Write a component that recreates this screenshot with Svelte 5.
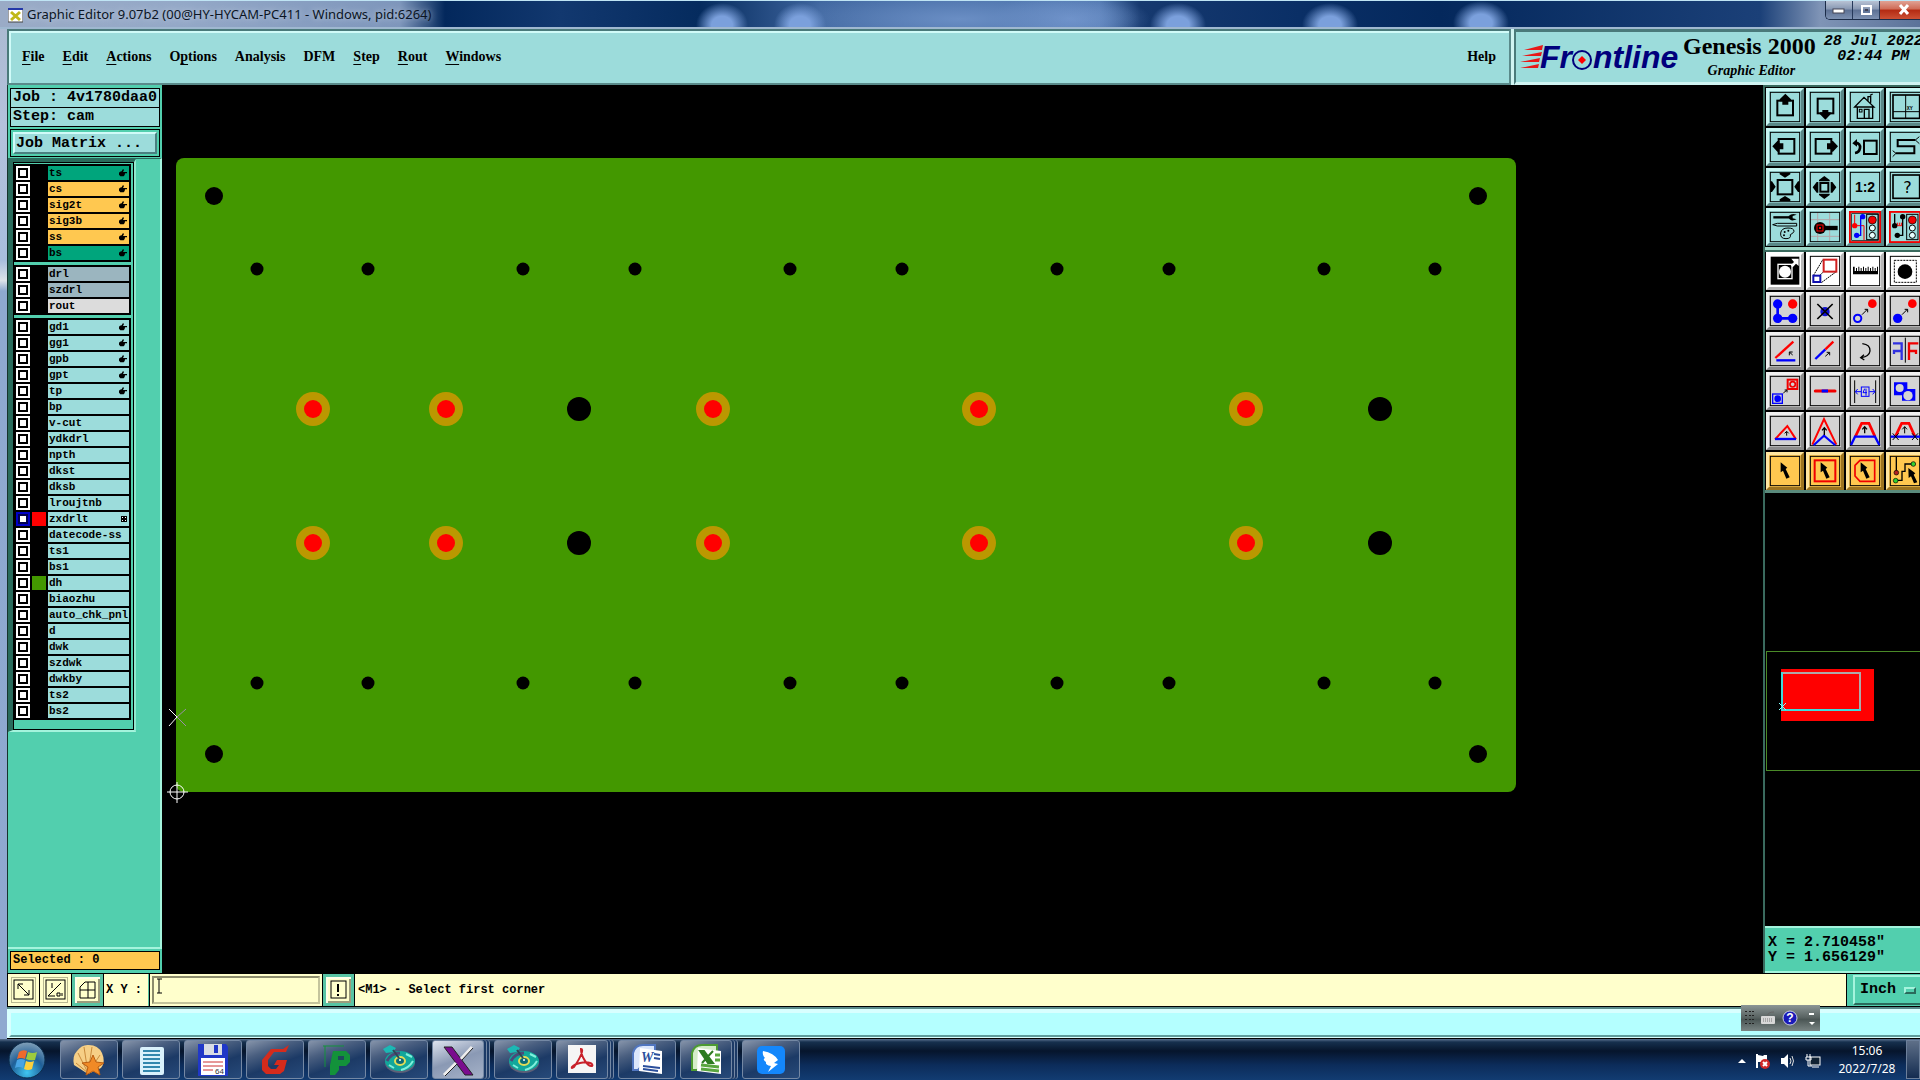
<script lang="ts">
  const menus = [
    { pre: '', key: 'F', post: 'ile' },
    { pre: '', key: 'E', post: 'dit' },
    { pre: '', key: 'A', post: 'ctions' },
    { pre: 'O', key: 'p', post: 'tions' },
    { pre: 'Analysis', key: '', post: '' },
    { pre: 'DFM', key: '', post: '' },
    { pre: '', key: 'S', post: 'tep' },
    { pre: '', key: 'R', post: 'out' },
    { pre: '', key: 'W', post: 'indows' }
  ];

  const layerGroups = [
    [
      { name: 'ts', kind: 'mask', hand: true },
      { name: 'cs', kind: 'signal', hand: true },
      { name: 'sig2t', kind: 'signal', hand: true },
      { name: 'sig3b', kind: 'signal', hand: true },
      { name: 'ss', kind: 'signal', hand: true },
      { name: 'bs', kind: 'mask', hand: true }
    ],
    [
      { name: 'drl', kind: 'drill' },
      { name: 'szdrl', kind: 'drill' },
      { name: 'rout', kind: 'rout' }
    ],
    [
      { name: 'gd1', hand: true },
      { name: 'gg1', hand: true },
      { name: 'gpb', hand: true },
      { name: 'gpt', hand: true },
      { name: 'tp', hand: true },
      { name: 'bp' },
      { name: 'v-cut' },
      { name: 'ydkdrl' },
      { name: 'npth' },
      { name: 'dkst' },
      { name: 'dksb' },
      { name: 'lroujtnb' },
      { name: 'zxdrlt', swatch: 'red', active: true },
      { name: 'datecode-ss' },
      { name: 'ts1' },
      { name: 'bs1' },
      { name: 'dh', swatch: 'green' },
      { name: 'biaozhu' },
      { name: 'auto_chk_pnl' },
      { name: 'd' },
      { name: 'dwk' },
      { name: 'szdwk' },
      { name: 'dwkby' },
      { name: 'ts2' },
      { name: 'bs2' }
    ]
  ] as any[][];

  const cornerHoles = [[52, 111], [1316, 111], [52, 669], [1316, 669]];
  const smallXs = [95, 206, 361, 473, 628, 740, 895, 1007, 1162, 1273];
  const smallYs = [184, 598];
  const padXs = [151, 284, 551, 817, 1084];
  const toolXs = [417, 1218];
  const padYs = [324, 458];

  const box = '<rect x="13" y="13" width="88" height="88" fill="none" stroke="#000" stroke-width="3"/>';

  // drawn on a grid of three units to the pixel
  const viewTools = [
    { label: 'Pan up', art: box + '<rect x="34" y="38" width="47" height="44" fill="none" stroke="#000" stroke-width="6"/><path d="M58 17L75 34V40H67V50H49V40H41V34Z"/>' },
    { label: 'Pan down', art: box + '<rect x="35" y="32" width="47" height="44" fill="none" stroke="#000" stroke-width="6"/><path d="M58 95L74 79V73H67V66H49V73H42V79Z"/>' },
    { label: 'Home', art: box + '<path d="M34 55V91H80V55M26 57L54 28L84 57ZM66 38V26H74V44M72 22L80 18M55 91V64H69V91" fill="none" stroke="#000" stroke-width="4"/><rect x="40" y="64" width="8" height="8" fill="none" stroke="#000" stroke-width="3"/>' },
    { label: 'Zoom to coordinates', art: '<rect x="13" y="13" width="96" height="88" fill="none" stroke="#000" stroke-width="3"/><rect x="21" y="21" width="80" height="70" fill="none" stroke="#000" stroke-width="5"/><path d="M59 21V91M21 71H100" fill="none" stroke="#000" stroke-width="3"/><text x="62" y="66" font-size="15" font-family="Liberation Mono" font-weight="bold">XY</text>' },
    { label: 'Pan left', art: box + '<rect x="38" y="33" width="47" height="44" fill="none" stroke="#000" stroke-width="6"/><path d="M19 55L34 39H40V46H52V64H40V71H34Z"/>' },
    { label: 'Pan right', art: box + '<rect x="29" y="33" width="47" height="44" fill="none" stroke="#000" stroke-width="6"/><path d="M96 55L81 39H75V46H63V64H75V71H81Z"/>' },
    { label: 'Previous view', art: box + '<rect x="54" y="38" width="38" height="40" fill="none" stroke="#000" stroke-width="6"/><path d="M28 44Q44 46 42 60Q40 73 27 75" fill="none" stroke="#000" stroke-width="8"/><path d="M19 46L33 33V56Z"/>' },
    { label: 'Serpentine', art: '<rect x="13" y="13" width="96" height="88" fill="none" stroke="#000" stroke-width="3"/><path d="M88 36H35V55H85V76H30" fill="none" stroke="#000" stroke-width="6"/><path d="M88 36L100 26M88 36L100 47M30 76L20 68M30 76L20 86" stroke="#000" stroke-width="3"/>' },
    { label: 'Zoom in', art: box + '<rect x="35" y="36" width="44" height="43" fill="none" stroke="#000" stroke-width="6"/><path d="M41 14H73V19L57 29L41 19ZM41 99H73V94L57 84L41 94ZM13 40V72H18L29 56L18 40ZM101 40V72H96L85 56L96 40Z"/>' },
    { label: 'Zoom out', art: box + '<rect x="43" y="45" width="24" height="26" fill="none" stroke="#000" stroke-width="6"/><path d="M55 24L71 36V40H39V36ZM55 93L71 81V77H39V81ZM20 58L32 42H37V74H32ZM91 58L79 42H74V74H79Z"/>' },
    { label: 'Scale', art: box + '<text x="57" y="72" font-size="42" text-anchor="middle" font-family="Liberation Sans" font-weight="bold">1:2</text>' },
    { label: 'Query', art: '<rect x="13" y="13" width="96" height="88" fill="none" stroke="#000" stroke-width="3"/><rect x="21" y="21" width="80" height="70" fill="none" stroke="#000" stroke-width="5"/><text x="64" y="74" font-size="48" text-anchor="middle" font-family="DejaVu Sans Mono">?</text>' },
    { label: 'Tools', art: box + '<path d="M22 28H70" stroke="#000" stroke-width="7"/><path d="M92 20Q78 14 68 24Q66 32 76 37Q84 38 92 34L80 31V24Z" /><path d="M20 50L34 46H92V54H34Z" fill="#9cdcdb" stroke="#000" stroke-width="3"/><path d="M44 75Q46 60 66 60Q84 60 84 70Q82 76 73 80Q76 92 60 92Q42 92 44 75Z" fill="none" stroke="#000" stroke-width="3"/><circle cx="56" cy="72" r="3"/><circle cx="67" cy="68" r="3"/><circle cx="54" cy="82" r="3"/>' },
    { label: 'Highlight', art: '<path d="M35 13V101M71 13V101M13 35H101M13 85H101" stroke="#b5a5a8" stroke-width="3"/>' + box + '<path d="M44 60H95" stroke="#000" stroke-width="13"/><circle cx="42" cy="60" r="18"/><rect x="33" y="51" width="18" height="18" fill="none" stroke="#f00" stroke-width="3"/><rect x="39" y="57" width="6" height="6" fill="#f00"/>' },
    { label: 'Selection filter', art: '<rect x="10" y="10" width="94" height="94" fill="none" stroke="#f00000" stroke-width="9"/><rect x="17" y="17" width="80" height="80" fill="none" stroke="#000" stroke-width="2"/><path d="M26 20V53H54V96" fill="none" stroke="#f00" stroke-width="3"/><path d="M50 26H44V82H32" fill="none" stroke="#00f" stroke-width="4"/><circle cx="26" cy="53" r="8" fill="#f00"/><circle cx="50" cy="26" r="8" fill="#00f"/><circle cx="32" cy="82" r="8" fill="#00f"/><rect x="62" y="19" width="34" height="76" fill="#9cdcdb" stroke="#000" stroke-width="3"/><circle cx="79" cy="36" r="12" fill="#f00000" stroke="#000" stroke-width="2"/><circle cx="79" cy="60" r="9" fill="#e8ffff" stroke="#000" stroke-width="3"/><circle cx="79" cy="82" r="9" fill="#e8ffff" stroke="#000" stroke-width="3"/>' },
    { label: 'Snap filter', art: '<rect x="10" y="10" width="94" height="94" fill="none" stroke="#f00000" stroke-width="9"/><path d="M26 18V53M50 26V82H32" fill="none" stroke="#000" stroke-width="4"/><path d="M26 53H48M34 51V44M40 51V44M46 51V44" stroke="#f00" stroke-width="3"/><circle cx="26" cy="53" r="8"/><circle cx="50" cy="26" r="8"/><circle cx="34" cy="82" r="8"/><rect x="62" y="19" width="34" height="76" fill="#9cdcdb" stroke="#000" stroke-width="3"/><circle cx="79" cy="36" r="12" fill="#f00000" stroke="#000" stroke-width="2"/><circle cx="79" cy="60" r="9" fill="#e8ffff" stroke="#000" stroke-width="3"/><circle cx="79" cy="82" r="9" fill="#e8ffff" stroke="#000" stroke-width="3"/>' }
  ];

  const pointer = '<path d="M44 31L64 47L59 51L71 76L61 80L51 56L44 61Z"/>';

  const editTools = [
    { label: 'Pad', tone: 'white', art: '<rect x="14" y="14" width="86" height="84"/><rect x="36" y="37" width="42" height="43" fill="none" stroke="#fff" stroke-width="4"/><circle cx="57" cy="59" r="18" fill="#fff"/><path d="M74 40L84 30L76 20H98V42L90 35L80 46Z" fill="#fff"/>' },
    { label: 'Resize polygon', tone: 'white', art: box + '<path d="M22 71L51 22M46 92L92 58M40 71L52 60" stroke="#000" stroke-width="3" stroke-dasharray="6 2"/><rect x="53" y="23" width="38" height="36" fill="none" stroke="#d02020" stroke-width="6"/><rect x="22" y="71" width="21" height="19" fill="none" stroke="#1010b0" stroke-width="6"/>' },
    { label: 'Measure', tone: 'white', art: box + '<path d="M21 44V67H96V44H93V57H89V48H86V57H82V44H79V57H75V48H72V57H68V44H65V57H61V48H58V57H54V44H51V57H47V48H44V57H40V44H37V57H33V48H30V57H26V44Z"/>' },
    { label: 'Area select', tone: 'white', art: '<rect x="13" y="13" width="96" height="88" fill="none" stroke="#000" stroke-width="3"/><rect x="25" y="25" width="66" height="66" fill="none" stroke="#000" stroke-width="3" stroke-dasharray="6 3"/><circle cx="57" cy="59" r="22"/>' },
    { label: 'Move', art: box + '<path d="M35 36V79H80" fill="none" stroke="#00f" stroke-width="8"/><circle cx="35" cy="36" r="14" fill="#00f"/><circle cx="35" cy="79" r="14" fill="#00f"/><circle cx="80" cy="79" r="14" fill="#00f"/><circle cx="80" cy="36" r="14" fill="#f00"/>' },
    { label: 'Delete', art: box + '<circle cx="57" cy="59" r="14" fill="#1010d0"/><path d="M34 36L80 81M80 36L34 81" stroke="#000" stroke-width="5"/>' },
    { label: 'Copy', art: box + '<circle cx="35" cy="79" r="11" fill="#d3d3d3" stroke="#00f" stroke-width="6"/><circle cx="79" cy="35" r="13" fill="#f00"/><path d="M48 68L64 52M56 52H65V61" fill="none" stroke="#000" stroke-width="3"/>' },
    { label: 'Copy other', art: box + '<circle cx="35" cy="79" r="14" fill="#00f"/><circle cx="79" cy="35" r="13" fill="#f00"/><path d="M48 68L64 52M56 52H65V61" fill="none" stroke="#000" stroke-width="3"/>' },
    { label: 'Rotate', art: box + '<path d="M28 78L82 29" stroke="#f00" stroke-width="7"/><path d="M31 85H88" stroke="#00f" stroke-width="7"/><path d="M80 69L71 61M70 70V60H80" fill="none" stroke="#000" stroke-width="3"/>' },
    { label: 'Extend line', art: box + '<path d="M28 81L58 52" stroke="#00f" stroke-width="7"/><path d="M58 52L82 29" stroke="#f00" stroke-width="7"/><path d="M58 73L70 62M62 61H71V70" fill="none" stroke="#000" stroke-width="3"/>' },
    { label: 'Arc', art: box + '<path d="M49 35Q73 38 72 57Q70 73 46 77M54 68L44 77L55 84" fill="none" stroke="#000" stroke-width="4"/>' },
    { label: 'Mirror', art: box + '<path d="M58 17V92" stroke="#000" stroke-width="3"/><path d="M21 34H47V84M47 57H24V66" fill="none" stroke="#3030e0" stroke-width="7"/><path d="M97 34H69V84M69 57H90V66" fill="none" stroke="#f00000" stroke-width="7"/>' },
    { label: 'Change size', art: box + '<rect x="65" y="23" width="29" height="28" fill="#d3d3d3" stroke="#f00000" stroke-width="6"/><circle cx="80" cy="37" r="8" fill="none" stroke="#f00000" stroke-width="5"/><rect x="20" y="66" width="29" height="28" fill="#d3d3d3" stroke="#00f" stroke-width="4"/><circle cx="35" cy="80" r="10" fill="#00f"/><path d="M52 63L62 55M56 54H63V61" fill="none" stroke="#000" stroke-width="3"/>' },
    { label: 'Split line', art: box + '<path d="M28 57H87" stroke="#f00000" stroke-width="9" stroke-linecap="round"/><path d="M47 57H66" stroke="#00f" stroke-width="9"/>' },
    { label: 'Spacing', art: box + '<path d="M26 25V93M89 25V93" stroke="#000" stroke-width="3"/><path d="M28 59H45M70 59H87M35 51L28 59L35 67M80 51L87 59L80 67M56 50L51 62H63M60 50V71" fill="none" stroke="#00f" stroke-width="3"/><rect x="46" y="45" width="23" height="28" fill="none" stroke="#00f" stroke-width="3"/>' },
    { label: 'Merge', art: box + '<path d="M24 31H64V51H88V86H48V70H24Z" fill="#00f"/><circle cx="41" cy="48" r="12" fill="#d3d3d3"/><circle cx="66" cy="71" r="14" fill="#d3d3d3"/>' },
    { label: 'Corner', art: box + '<path d="M27 82L64 42L90 82" fill="none" stroke="#f00" stroke-width="6"/><path d="M27 81H90" stroke="#00f" stroke-width="7"/><path d="M62 71V59M56 64L62 58L68 64" fill="none" stroke="#000" stroke-width="3"/>' },
    { label: 'Stretch corner', art: box + '<path d="M19 98L54 21L91 98" fill="none" stroke="#f00" stroke-width="6"/><path d="M23 100L54 71L88 100" fill="none" stroke="#00f" stroke-width="6"/><path d="M55 69V47M48 55L55 47L62 55" fill="none" stroke="#000" stroke-width="4"/>' },
    { label: 'Stretch segment', art: box + '<path d="M28 74L47 34H69L87 74" fill="none" stroke="#f00" stroke-width="8"/><path d="M15 99L27 74H87L100 99" fill="none" stroke="#00f" stroke-width="7"/><path d="M56 64V44M49 52L56 44L63 52" fill="none" stroke="#000" stroke-width="4"/>' },
    { label: 'Parallel segment', art: box + '<path d="M28 74L47 34H69L87 74" fill="none" stroke="#f00" stroke-width="8"/><path d="M14 74H102" stroke="#00f" stroke-width="7"/><path d="M56 64V44M49 52L56 44L63 52M20 64L38 84M38 64L20 84M78 64L96 84M96 64L78 84" fill="none" stroke="#000" stroke-width="3"/>' },
    { label: 'Select feature', tone: 'amber', art: box + pointer },
    { label: 'Select in rectangle', tone: 'amber', art: box + '<rect x="26" y="25" width="62" height="63" fill="none" stroke="#f00000" stroke-width="6"/>' + pointer },
    { label: 'Select in polygon', tone: 'amber', art: box + '<path d="M42 25H86V88H42L27 72V40Z" fill="none" stroke="#f00000" stroke-width="5"/>' + pointer },
    { label: 'Select net', tone: 'amber', art: box + '<path d="M31 14V62M31 85H48V58H57V36H80" fill="none" stroke="#000" stroke-width="4"/><circle cx="31" cy="62" r="7" fill="#b02020" stroke="#000" stroke-width="2"/><circle cx="29" cy="86" r="7" fill="#30d030" stroke="#000" stroke-width="2"/><circle cx="82" cy="36" r="7" fill="#30d030" stroke="#000" stroke-width="2"/><path d="M67 48L88 64L83 68L94 91L84 94L75 73L68 78Z"/>' }
  ];

  const disc = '<ellipse cx="18" cy="20" rx="15" ry="10" fill="#5c6078"/><ellipse cx="18" cy="18" rx="15" ry="10" fill="#12a79b"/><path d="M5 18Q9 10 18 10" fill="none" stroke="#4a4a7a" stroke-width="3"/><path d="M31 18Q27 25 19 27M24 11L30 14M7 22L12 25" fill="none" stroke="#7ff0dc" stroke-width="2"/><ellipse cx="18" cy="18" rx="5" ry="4" fill="#0c6b78" stroke="#e3dc57" stroke-width="2"/><circle cx="18" cy="17" r="1" fill="#fff"/><path d="M1 6L8 2L14 5L11 9L4 10Z" fill="#1cb8b4"/><path d="M11 7L17 15" stroke="#345" stroke-width="2"/>';

  const tasks = [
    { label: 'Shell', art: '<path d="M16 31L2 22Q0 13 5 8Q10 1 17 2Q26 2 30 10Q34 19 29 25Z" fill="#f6cf86"/><path d="M16 30L4 20M16 30L6 10M16 30L12 4M16 30L20 4M16 30L28 12" stroke="#c98b3c" stroke-width="1"/><path d="M21 12L24 19L32 20L26 24L28 32L21 28L14 32L16 24L10 20L18 19Z" fill="#f08a26" stroke="#b85d12" stroke-width="1"/>' },
    { label: 'Notepad', art: '<rect x="6" y="4" width="24" height="28" rx="2" fill="#d9f1fb"/><path d="M9 8H26M9 12H26M9 16H26M9 20H26M9 24H26M9 28H26" stroke="#3287ad" stroke-width="2"/>' },
    { label: 'Disk', art: '<path d="M2 1H30L32 4V33H2Z" fill="#2038c8"/><rect x="8" y="1" width="18" height="11" fill="#d8dce4"/><rect x="18" y="2" width="4" height="8" fill="#2038c8"/><rect x="5" y="15" width="24" height="17" fill="#fff"/><path d="M7 19H27M7 23H27M7 27H17" stroke="#c33" stroke-width="1"/><text x="19" y="31" font-size="8" font-family="Liberation Sans" fill="#333">64</text>' },
    { label: 'Genesis', art: '<path d="M31 2L28 9H16L10 17V23L13 26H18L21 22H16L19 17H29L26 28L22 31H8L4 27V17L13 6H25Z" fill="#d52b1c"/>' },
    { label: 'Plotter', art: '<path d="M10 32V22L13 8H26L30 12V19L26 23H19V27L15 32Z" fill="#13923a"/><path d="M3 3H24M5 3V24" stroke="#13923a" stroke-width="1"/><rect x="18" y="13" width="6" height="4" fill="#1f4a5c"/>' },
    { label: 'InCAM disc', art: disc },
    { label: 'X server', active: true, stacked: true, art: '<path d="M3 4H11L32 32H24Z" fill="#7a0c8e" stroke="#222" stroke-width="1"/><path d="M31 4L20 16M15 20L3 32" stroke="#eee" stroke-width="3"/><path d="M32 5L21 17M16 21L4 33" stroke="#222" stroke-width="1"/>' },
    { label: 'InCAM disc two', art: disc },
    { label: 'PDF reader', stacked: true, art: '<rect x="3" y="2" width="28" height="28" fill="#f5f5f5"/><path d="M16 6C19 6 16 14 9 24C5 27 6 22 15 20C24 18 29 21 27 23C23 24 16 14 16 6Z" fill="none" stroke="#c8202a" stroke-width="2"/>' },
    { label: 'Word', art: '<path d="M3 27V10Q5 2 13 2H25V8L8 27Z" fill="#dbe6fb" stroke="#5176c0" stroke-width="2"/><path d="M10 5L32 8V31L9 28Z" fill="#fff"/><text x="11" y="19" font-size="14" font-style="italic" font-weight="bold" font-family="Liberation Serif" fill="#2b4f9c">W</text><path d="M24 11L30 12M24 15L30 16M13 23L30 25M13 26L28 28" stroke="#2b4f9c" stroke-width="2"/>' },
    { label: 'Excel', stacked: true, art: '<path d="M3 27V10Q5 2 13 2H28V8L8 27Z" fill="#d5edc9" stroke="#4d9b32" stroke-width="2"/><path d="M9 5L32 8V31L8 28Z" fill="#fff"/><path d="M11 8H15L24 20H19ZM24 8L13 20" fill="#2e7b22" stroke="#2e7b22" stroke-width="2"/><path d="M26 12H31M26 17H31M12 26L30 28M12 22L30 24" stroke="#59a63f" stroke-width="3"/>' },
    { label: 'Messenger', art: '<rect x="3" y="3" width="28" height="28" rx="5" fill="#1487fb"/><path d="M9 8Q20 10 24 17L20 20L24 21L14 29L17 23Q11 22 12 19Q8 16 11 15Q8 12 9 8Z" fill="#fff"/>' }
  ];
</script>

<div class="desktop">
  <div class="window">
    <header class="title-bar">
      <svg class="app-icon" width="15" height="15" viewBox="0 0 15 15">
        <rect x="0" y="0" width="15" height="14" fill="#fff" stroke="#444" />
        <path d="M0 1H15" stroke="#2438a8" stroke-width="2" />
        <path d="M3 4L12 12M12 4L3 12" stroke="#c0b818" stroke-width="3" />
      </svg>
      <h1>Graphic Editor 9.07b2 (00@HY-HYCAM-PC411 - Windows, pid:6264)</h1>
      <div class="caption-buttons">
        <button class="caption" aria-label="Minimize"><svg width="14" height="12"><rect x="1" y="5" width="11" height="4" fill="#fff" stroke="#445" /></svg></button>
        <button class="caption" aria-label="Maximize"><svg width="14" height="12"><rect x="3" y="2" width="9" height="8" fill="none" stroke="#fff" stroke-width="2" /><rect x="6" y="5" width="3" height="2" fill="#445" /></svg></button>
        <button class="caption close" aria-label="Close"><svg width="14" height="12"><path d="M3 1L11 10M11 1L3 10" stroke="#fff" stroke-width="3" /></svg></button>
      </div>
    </header>

    <div class="top-row">
      <nav class="menu-bar">
        {#each menus as m}
          <button class="menu">{m.pre}{#if m.key}<span class="key">{m.key}</span>{/if}{m.post}</button>
        {/each}
        <button class="menu help">Help</button>
      </nav>
      <div class="brand">
        <svg class="logo" width="162" height="36" viewBox="0 0 162 36">
          <path d="M23 7L4 12H22ZM22 14L2 18H21ZM20 20L0 24H19ZM19 26L0 30H18Z" fill="#e81818" />
          <g class="logo-text">
            <text x="20" y="30">Fr</text>
            <text x="73" y="30">ntline</text>
          </g>
          <circle cx="62" cy="22" r="9" fill="#9cdcdb" stroke="#00007c" stroke-width="2" />
          <path d="M62 18L66 22L62 26L58 22Z" fill="#f00" />
        </svg>
        <div class="product">
          <div class="product-name">Genesis 2000</div>
          <div class="product-sub">Graphic Editor</div>
        </div>
        <div class="stamp">
          <div>28 Jul 2022</div>
          <div>02:44 PM</div>
        </div>
      </div>
    </div>

    <main class="workspace">
      <aside class="sidebar">
        <div class="job-info">
          <div>Job : 4v1780daa0</div>
          <div>Step: cam</div>
        </div>
        <div class="matrix-frame">
          <button class="matrix">Job Matrix ...</button>
        </div>
        <div class="layer-pane">
          <div class="layers">
            <div class="layers-inner">
              {#each layerGroups as group}
                <div class="group">
                  {#each group as layer}
                    <label class="layer">
                      <input type="checkbox" class="tick" class:tick-active={layer.active} />
                      <span class="swatch {layer.swatch || ''}"></span>
                      <span class="layer-name {layer.kind || ''}">
                        <span class="layer-text">{layer.name}</span>
                        {#if layer.hand}
                          <svg width="8" height="8" viewBox="0 0 24 24"><path d="M12 0L15 3L12 9H24V13H18L17 18L14 22H4L0 17V11L3 8L8 7Z" /></svg>
                        {:else if layer.active}
                          <svg width="6" height="6" shape-rendering="crispEdges"><path d="M0 0H6V6H0Z" /><path d="M1 1H2V2H1ZM4 1H5V2H4ZM1 4H2V5H1ZM4 4H5V5H4Z" fill="#fff" /></svg>
                        {/if}
                      </span>
                    </label>
                  {/each}
                </div>
              {/each}
            </div>
          </div>
        </div>
        <div class="selected">Selected : 0</div>
      </aside>

      <svg class="canvas">
        <rect x="14" y="73" width="1340" height="634" rx="8" fill="#439800" />
        {#each cornerHoles as [x, y]}
          <circle cx={x} cy={y} r="9" />
        {/each}
        {#each smallYs as y}
          {#each smallXs as x}
            <circle cx={x} cy={y} r="6.5" />
          {/each}
        {/each}
        {#each padYs as y}
          {#each padXs as x}
            <circle cx={x} cy={y} r="17" fill="#bb9800" />
            <circle cx={x} cy={y} r="9" fill="#f00" />
          {/each}
          {#each toolXs as x}
            <circle cx={x} cy={y} r="12" />
          {/each}
        {/each}
        <!-- datum and origin marks -->
        <path d="M7 624L15 632L7 641" fill="none" stroke="#fff" />
        <path d="M24 624L15 632L24 641" fill="none" stroke="#9a8fa8" />
        <circle cx="15" cy="707" r="7" fill="none" stroke="#fff" />
        <path d="M5 707H26M15 697V718" stroke="#fff" />
      </svg>

      <aside class="tool-panel">
        <div class="tool-grid view-grid">
          {#each viewTools as tool}
            <button class="tool" aria-label={tool.label}>
              <svg width="32" height="32" viewBox="9 9 96 96">{@html tool.art}</svg>
            </button>
          {/each}
        </div>
        <div class="tool-grid edit-grid">
          {#each editTools as tool}
            <button class="tool {tool.tone || 'gray'}" aria-label={tool.label}>
              <svg width="32" height="32" viewBox="9 9 96 96">{@html tool.art}</svg>
            </button>
          {/each}
        </div>
        <svg class="overview" shape-rendering="crispEdges">
          <path d="M200 158H1V277H200" fill="none" stroke="#4a8a28" />
          <rect x="16" y="176" width="93" height="52" fill="#f00" />
          <path d="M17 180H95V216" fill="none" stroke="#b0a8a8" stroke-width="2" />
          <path d="M17 179V217H96" fill="none" stroke="#40dcdc" stroke-width="2" />
          <path d="M14 210L21 217M21 210L14 217" stroke="#8ff" />
        </svg>
        <div class="coords">
          <div>X = 2.710458"</div>
          <div>Y = 1.656129"</div>
        </div>
      </aside>
    </main>

    <div class="command-bar">
      <button class="cmd" aria-label="Relative move">
        <svg width="22" height="22"><rect x="1" y="1" width="19" height="19" fill="none" stroke="#000" /><path d="M5 5L16 16M5 10V5H10M16 11V16H11" fill="none" stroke="#000" /></svg>
      </button>
      <button class="cmd" aria-label="Polar entry">
        <svg width="22" height="22"><rect x="1" y="1" width="19" height="19" fill="none" stroke="#000" /><path d="M3 17L16 4M3 17H10M7 4V9M12 14H15V17H12ZM17 14V17" fill="none" stroke="#000" /></svg>
      </button>
      <button class="cmd raised" aria-label="Grid">
        <svg width="18" height="20"><path d="M1 18V7L6 2H16V18ZM1 10H16M9 2V18" fill="none" stroke="#000" /></svg>
      </button>
      <label class="xy-label" for="xy">X Y :</label>
      <div class="xy-frame">
        <input id="xy" class="xy" type="text" />
        <svg class="caret" width="7" height="17"><path d="M1 1H6M1 15H6M3 1V15" fill="none" stroke="#000" /></svg>
      </div>
      <button class="cmd raised" aria-label="Alert">
        <svg width="18" height="20"><rect x="1" y="1" width="15" height="17" fill="none" stroke="#000" /><path d="M8 4V12M8 14V16" stroke="#000" stroke-width="2" /></svg>
      </button>
      <div class="prompt">&lt;M1&gt; - Select first corner</div>
      <div class="unit-frame">
        <button class="unit">Inch<span class="unit-mark"></span></button>
      </div>
    </div>

    <div class="status"><div class="status-inner"></div></div>
  </div>

  <div class="language-bar">
    <svg width="79" height="26">
      <path d="M5 6V22M9 6V22M12 6V22" stroke="#222" stroke-width="2" stroke-dasharray="1 3" />
      <rect x="20" y="11" width="14" height="8" rx="1" fill="#d8d8d8" /><path d="M22 14H32M22 16H32" stroke="#777" stroke-dasharray="1 1" /><path d="M26 11Q27 7 33 7" fill="none" stroke="#666" />
      <circle cx="49" cy="13" r="7" fill="#1a1ab8" stroke="#c8cce0" />
      <text x="49" y="17" text-anchor="middle" class="help-mark">?</text>
      <path d="M68 9H73" stroke="#fff" stroke-width="2" /><path d="M68 17H74L71 20Z" fill="#fff" />
    </svg>
  </div>

  <footer class="taskbar">
    <button class="start" aria-label="Start">
      <svg width="38" height="38" viewBox="0 0 38 38">
        <defs>
          <radialGradient id="orb" cx="0.5" cy="0.85" r="0.9"><stop offset="0" stop-color="#3fc6f2" /><stop offset="0.5" stop-color="#1f5f98" /><stop offset="1" stop-color="#8fa9bc" /></radialGradient>
        </defs>
        <circle cx="19" cy="19" r="18" fill="url(#orb)" stroke="#0a2c4c" />
        <path d="M11 11Q15 8 19 10L17 18Q13 16 9 18Z" fill="#ee6a2c" />
        <path d="M20 11Q25 13 29 11L27 19Q22 20 18 18Z" fill="#9ccb3e" />
        <path d="M9 19Q13 17 17 19L15 27Q11 25 7 27Z" fill="#48a4e4" />
        <path d="M18 20Q22 22 26 20L24 28Q20 30 16 28Z" fill="#fcd03c" />
      </svg>
    </button>
    <div class="tasks">
      {#each tasks as task}
        <button class="task" class:task-active={task.active} class:stacked={task.stacked} aria-label={task.label}>
          <svg width="34" height="34" viewBox="0 0 34 34">{@html task.art}</svg>
        </button>
      {/each}
    </div>
    <div class="tray">
      <svg width="8" height="6"><path d="M0 5L4 1L8 5Z" fill="#fff" /></svg>
      <svg width="16" height="16"><path d="M2 1V15" stroke="#fff" stroke-width="2" /><path d="M3 2L8 3L9 2H12V9H3Z" fill="#fff" /><circle cx="10" cy="11" r="5" fill="#d02828" /><path d="M8 9L12 13M12 9L8 13" stroke="#fff" stroke-width="2" /></svg>
      <svg width="16" height="16"><path d="M1 5H4L8 1V15L4 11H1Z" fill="#fff" /><path d="M10 5Q12 8 10 11M12 3Q15 8 12 13" fill="none" stroke="#ddd" /></svg>
      <svg width="16" height="16"><rect x="5" y="4" width="10" height="8" fill="#123" stroke="#fff" /><path d="M7 14H14M2 1V4M5 1V4M1 4H6V7H1ZM3 7V13H7" fill="none" stroke="#fff" /></svg>
    </div>
    <div class="clock">
      <div>15:06</div>
      <div>2022/7/28</div>
    </div>
    <button class="show-desktop" aria-label="Show desktop"></button>
  </footer>
</div>

<style>
  :global(body) {
    margin: 0;
    background: #000;
  }

  button {
    margin: 0;
    padding: 0;
    border: 0;
    background: none;
    color: #000;
    font: inherit;
  }

  svg {
    display: block;
    flex-shrink: 0;
  }

  .desktop {
    position: relative;
    display: flex;
    flex-direction: column;
    min-height: 100vh;
    overflow: hidden;
    background: #000;
  }

  .window {
    flex: 1;
    display: flex;
    flex-direction: column;
    padding-left: 7px;
    background: linear-gradient(#a9b8cf, #b4c2dc 12%, #a8bddd 25%, #dde3ea 27%, #8ea9d0 28%, #8fa8d0);
  }

  .title-bar {
    display: flex;
    align-items: flex-start;
    height: 29px;
    box-sizing: border-box;
    margin-left: -7px;
    padding-left: 8px;
    border-top: 1px solid #bfe4f4;
    border-bottom: 2px solid #9fb8d0;
    background:
      radial-gradient(ellipse 26px 22px at 722px 24px, #7ba0dc, #7ba0dc 40%, transparent),
      radial-gradient(ellipse 26px 22px at 800px 24px, #7ba0dc, #7ba0dc 40%, transparent),
      radial-gradient(ellipse 180px 30px at 960px 18px, #6a8ec4, transparent),
      radial-gradient(ellipse 80px 26px at 1070px 18px, #7396ce, transparent),
      radial-gradient(ellipse 28px 22px at 1178px 24px, #7ba0dc, #7ba0dc 40%, transparent),
      radial-gradient(ellipse 28px 22px at 1330px 24px, #7ba0dc, #7ba0dc 40%, transparent),
      radial-gradient(ellipse 28px 22px at 1481px 22px, #7ba0dc, #7ba0dc 40%, transparent),
      linear-gradient(90deg, #9aabc6 0, #94a8c7 180px, #7e96bb 400px, #03285c 445px, #12386f 560px, #052b5e 700px, #3f669f 820px, #4c73ab 1100px, #16396f 1140px, #0a2f66 1300px, #04285c 1440px, #1b4078 1760px, #7f94b6 1820px, #5b7299 100%);
  }

  .app-icon {
    margin-top: 7px;
  }

  h1 {
    flex: 1;
    margin: 4px 0 0 4px;
    color: #0b1524;
    font: 13px/18px "Noto Sans", sans-serif;
    text-shadow: 0 0 6px #c8d4e6;
  }

  .caption-buttons {
    display: flex;
    height: 18px;
    border: 1px solid #1b2c48;
    border-top: 0;
    border-right: 0;
    border-radius: 0 0 0 5px;
    overflow: hidden;
  }

  .caption {
    display: flex;
    align-items: center;
    justify-content: center;
    width: 27px;
    border-right: 1px solid #26395a;
    background: linear-gradient(#b8c3d4, #8797b2 45%, #5d7194 50%, #7d91b2);
  }

  .caption.close {
    width: 40px;
    padding-left: 8px;
    border-right: 0;
    background: linear-gradient(#e0a294, #cf6a55 45%, #b32a12 50%, #cc5034);
  }

  .top-row {
    display: flex;
    height: 56px;
    background: #d0f4f2;
  }

  .menu-bar {
    flex: 1;
    display: flex;
    align-items: center;
    gap: 18px;
    margin-right: 3px;
    padding: 0 13px;
    border: 2px solid #4a7a7a;
    border-bottom-color: #5a8a8a;
    border-right-color: #5a8a8a;
    background: #9cdcdb;
    box-shadow: inset 2px 2px 0 #d0fbf8;
    font: bold 14px/16px "Liberation Serif", serif;
  }

  .key {
    text-decoration: underline;
    text-underline-offset: 3px;
  }

  .help {
    margin-left: auto;
  }

  .brand {
    width: 400px;
    display: flex;
    overflow: hidden;
    padding-left: 4px;
    border-top: 3px solid #4a7a7a;
    border-left: 2px solid #4a7a7a;
    border-bottom: 3px solid #d0f4f2;
    background: #9cdcdb;
  }

  .logo {
    margin-top: 6px;
  }

  .logo-text {
    fill: #00007c;
    font: italic bold 32px "Liberation Sans", sans-serif;
  }

  .product {
    padding-left: 1px;
    text-align: center;
    white-space: nowrap;
  }

  .product-name {
    font: bold 24px/28px "Liberation Serif", serif;
  }

  .product-sub {
    padding: 3px 0 0 4px;
    font: italic bold 14px/16px "Liberation Serif", serif;
  }

  .stamp {
    padding: 2px 0 0 8px;
    font: italic bold 15px/15px "Liberation Mono", monospace;
    text-align: center;
    white-space: nowrap;
  }

  .workspace {
    flex: 1;
    display: flex;
    background: #000;
  }

  .sidebar {
    width: 155px;
    box-sizing: border-box;
    display: flex;
    flex-direction: column;
    padding-top: 3px;
    border-left: 1px solid #16332c;
    background: #52cfae;
    font: bold 15px/17px "Liberation Mono", monospace;
    white-space: nowrap;
  }

  .job-info {
    margin: 0 2px;
    border: 1px solid #000;
    background: #9cdcdb;
  }

  .job-info div {
    height: 18px;
    padding-left: 2px;
  }

  .job-info div + div {
    border-top: 1px solid #000;
  }

  .matrix-frame {
    margin: 2px 2px 1px;
    padding: 2px;
    border: 1px solid #000;
  }

  .matrix {
    width: 100%;
    box-sizing: border-box;
    height: 22px;
    padding-left: 1px;
    border: 2px solid;
    border-color: #d0fbf8 #4a8080 #4a8080 #d0fbf8;
    background: #9cdcdb;
    text-align: left;
  }

  .layer-pane {
    flex: 1;
    border-top: 1px solid #2a6b5c;
    border-right: 2px solid #a4f4dd;
    border-bottom: 2px solid #a4f4dd;
  }

  .layers {
    width: 121px;
    border: solid;
    border-width: 3px 2px 2px 5px;
    border-color: #2a6b5c #8fe8ce #a4f4dd #2a6b5c;
  }

  .layers-inner {
    display: flex;
    flex-direction: column;
    gap: 3px;
    padding: 1px 2px 9px 0;
    border: 1px solid #000;
  }

  .group {
    display: flex;
    flex-direction: column;
    gap: 2px;
    padding: 2px;
    background: #000;
  }

  .layer {
    display: flex;
    gap: 2px;
    height: 14px;
  }

  .tick {
    appearance: none;
    width: 14px;
    height: 14px;
    margin: 0;
    border: 2px solid #fff;
    background: #fff;
    box-shadow: inset 0 0 0 2px #000;
  }

  .tick-active {
    border-color: #0000c8;
    box-shadow: inset 0 0 0 2px #000050;
  }

  .swatch {
    width: 14px;
  }

  .swatch.red {
    background: #f00;
  }

  .swatch.green {
    background: #439800;
  }

  .layer-name {
    flex: 1;
    min-width: 0;
    display: flex;
    align-items: center;
    padding-left: 1px;
    background: #9cdcdb;
    font-size: 11px;
    line-height: 14px;
  }

  .layer-name svg {
    margin-right: 2px;
  }

  .layer-text {
    flex: 1;
    min-width: 0;
  }

  .layer-name.mask {
    background: #00a57c;
  }

  .layer-name.signal {
    background: #ffc850;
  }

  .layer-name.drill {
    background: #9bb5bf;
  }

  .layer-name.rout {
    background: #dcdcdc;
  }

  .selected {
    margin: 2px 2px 3px;
    padding-left: 2px;
    border: 1px solid #000;
    background: #ffc850;
    font-size: 12px;
    line-height: 17px;
  }

  .canvas {
    flex: 1;
    min-width: 0;
    height: auto;
    background: #000;
  }

  .tool-panel {
    width: 155px;
    display: flex;
    flex-direction: column;
    overflow: hidden;
    border-left: 2px solid #3a6a5e;
  }

  .tool-grid {
    display: grid;
    grid-template-columns: repeat(4, 38px);
    gap: 2px;
    padding: 1px;
    border-top: 2px solid #3a6a5e;
    border-bottom: 3px solid #9fd8c8;
  }

  .edit-grid {
    padding: 0 1px;
    border-bottom-color: #5a8a7c;
  }

  .tool {
    width: 38px;
    height: 38px;
    border: 3px solid;
    border-color: #c8f7f4 #5a8888 #5a8888 #c8f7f4;
    background: #9cdcdb;
  }

  .tool.white {
    border-color: #fff #b8b8b8 #b8b8b8 #fff;
    background: #fff;
  }

  .tool.gray {
    border-color: #f0f0f0 #8c8c8c #8c8c8c #f0f0f0;
    background: #d3d3d3;
  }

  .tool.amber {
    border-color: #ffe6a0 #9c7420 #9c7420 #ffe6a0;
    background: #ffc850;
  }

  .overview {
    flex: 1;
    width: 100%;
    height: auto;
    background: #000;
  }

  .coords {
    padding: 7px 0 6px 3px;
    border-top: 2px solid #a4f4dd;
    border-bottom: 2px solid #a4f4dd;
    background: #52cfae;
    font: bold 15px/15px "Liberation Mono", monospace;
    white-space: nowrap;
  }

  .command-bar {
    display: flex;
    height: 32px;
    padding: 1px 0 1px 1px;
    background: #000;
    font: bold 12px/32px "Liberation Mono", monospace;
    white-space: nowrap;
  }

  .cmd {
    display: flex;
    align-items: center;
    justify-content: center;
    width: 31px;
    margin-right: 1px;
    background: #ffffcc;
    box-shadow: inset 0 0 0 3px #ffffcc, inset 0 0 0 4px #b8b890;
  }

  .cmd.raised {
    border: 3px solid #58c4a4;
    box-shadow: inset 2px 2px 0 #ffffe8, inset -2px -2px 0 #9c9c7c;
  }

  .xy-label {
    width: 42px;
    padding-left: 2px;
    border-right: 1px solid #58c4a4;
    background: #ffffcc;
  }

  .xy-frame {
    position: relative;
    display: flex;
    width: 172px;
    margin: 0 1px;
    padding: 2px;
    box-sizing: border-box;
    background: #ffffcc;
  }

  .xy {
    flex: 1;
    min-width: 0;
    padding: 0;
    border: 2px solid;
    border-color: #8c8c6c #c4c49c #c4c49c #8c8c6c;
    background: #ffffcc;
    font: inherit;
    line-height: 20px;
  }

  .caret {
    position: absolute;
    left: 6px;
    top: 4px;
  }

  .prompt {
    flex: 1;
    padding-left: 3px;
    background: #ffffcc;
  }

  .unit-frame {
    width: 67px;
    display: flex;
    margin-left: 1px;
    padding: 1px 0 1px 6px;
    background: #52cfae;
    overflow: hidden;
  }

  .unit {
    display: flex;
    flex: 1;
    align-items: center;
    gap: 8px;
    padding-left: 5px;
    border: 2px solid;
    border-color: #a4f4dd #2a6b5c #2a6b5c #a4f4dd;
    border-right: 0;
    font-size: 15px;
    line-height: 24px;
  }

  .unit-mark {
    width: 8px;
    height: 3px;
    border: 2px solid;
    border-color: #a4f4dd #2a6b5c #2a6b5c #a4f4dd;
  }

  .status {
    height: 27px;
    padding: 1px 0 1px 2px;
    border-top: 2px solid #5a8a8a;
    border-bottom: 1px solid #000;
    background: #d8ffff;
  }

  .status-inner {
    height: 22px;
    margin-top: 1px;
    border: 2px solid;
    border-color: #d8ffff #5f9c9c #5f9c9c #d8ffff;
    border-right: 0;
    background: #b4ffff;
  }

  .language-bar {
    position: absolute;
    right: 100px;
    bottom: 49px;
    background: linear-gradient(#8c9696, #56605f 50%, #4a5554 55%, #7a8584);
  }

  .help-mark {
    fill: #fff;
    font: bold 12px "Liberation Sans", sans-serif;
  }

  .taskbar {
    display: flex;
    align-items: center;
    height: 41px;
    background: linear-gradient(#5c7290 0, #16304e 3px, #06152c 12px, #0c2c5a 26px, #123c72);
    color: #fff;
  }

  .start {
    margin: 0 14px 0 8px;
  }

  .tasks {
    flex: 1;
    display: flex;
    gap: 4px;
  }

  .task {
    display: flex;
    align-items: center;
    justify-content: center;
    width: 58px;
    height: 39px;
    border: 1px solid #7488a4;
    border-radius: 3px;
    background: linear-gradient(160deg, #8694aa 0, #4a5f80 30%, #1c3a66 60%, #274a7a);
  }

  .task-active {
    background: linear-gradient(160deg, #dde3ee, #8a99b4 50%, #a5b2c8);
  }

  /* further windows of the same program peek out on the right */
  .stacked {
    width: 52px;
    margin-right: 6px;
    box-shadow: 2px 0 0 #1c3a66, 3px 0 0 #7488a4, 5px 0 0 #1c3a66, 6px 0 0 #7488a4;
  }

  .tray {
    display: flex;
    align-items: center;
    gap: 9px;
    padding-top: 2px;
  }

  .clock {
    width: 78px;
    padding: 1px 0 0 7px;
    font: 12px/18px "Noto Sans", sans-serif;
    text-align: center;
  }

  .show-desktop {
    width: 14px;
    height: 39px;
    border: 1px solid #6c7f9a;
    background: linear-gradient(#5e6f88, #142c50);
  }
</style>
